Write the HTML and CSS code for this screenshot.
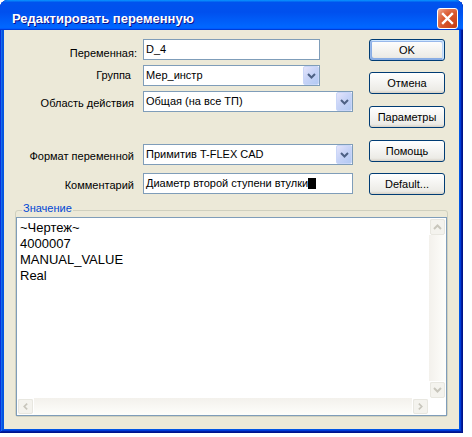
FILE: index.html
```html
<!DOCTYPE html>
<html lang="ru">
<head>
    <meta charset="UTF-8">
    <title>Редактировать переменную</title>
    <link rel="stylesheet" href="styles.css">
</head>
<body>
    <div class="window">
        <div class="titlebar">
            <span class="title">Редактировать переменную</span>
            <span class="close">
                <svg width="19" height="19" viewBox="0 0 19 19">
                    <path d="M5 5 L14 14 M14 5 L5 14" stroke="#fff" stroke-width="2.4" stroke-linecap="square" fill="none"/>
                </svg>
            </span>
        </div>
        <div class="client">
            <div class="top">
                <div class="form">
                    <div class="field">
                        <label class="field-label label-low">Переменная:</label>
                        <div class="input">D_4</div>
                    </div>
                    <div class="field">
                        <label class="field-label label-high">Группа</label>
                        <div class="combo">
                            <span class="combo-text">Мер_инстр</span>
                            <span class="combo-btn"><svg width="9" height="6" viewBox="0 0 9 6"><path d="M1 1 L4.5 4.5 L8 1" stroke="#4d6185" stroke-width="2" fill="none"/></svg></span>
                        </div>
                    </div>
                    <div class="field">
                        <label class="field-label">Область действия</label>
                        <div class="combo combo-wide">
                            <span class="combo-text">Общая (на все ТП)</span>
                            <span class="combo-btn"><svg width="9" height="6" viewBox="0 0 9 6"><path d="M1 1 L4.5 4.5 L8 1" stroke="#4d6185" stroke-width="2" fill="none"/></svg></span>
                        </div>
                    </div>
                    <div class="field field-format">
                        <label class="field-label">Формат переменной</label>
                        <div class="combo combo-wide">
                            <span class="combo-text">Примитив T-FLEX CAD</span>
                            <span class="combo-btn"><svg width="9" height="6" viewBox="0 0 9 6"><path d="M1 1 L4.5 4.5 L8 1" stroke="#4d6185" stroke-width="2" fill="none"/></svg></span>
                        </div>
                    </div>
                    <div class="field field-comment">
                        <label class="field-label">Комментарий</label>
                        <div class="input input-wide">Диаметр второй ступени втулки<span class="caret"></span></div>
                    </div>
                </div>
                <div class="buttons">
                    <button class="btn btn-default">OK</button>
                    <button class="btn">Отмена</button>
                    <button class="btn btn-spaced">Параметры</button>
                    <button class="btn btn-spaced">Помощь</button>
                    <button class="btn">Default...</button>
                </div>
            </div>
            <div class="group">
                <span class="group-title">Значение</span>
                <div class="memo">
                    <div class="memo-main">
                        <div class="memo-text">
                            <div>~Чертеж~</div>
                            <div>4000007</div>
                            <div>MANUAL_VALUE</div>
                            <div>Real</div>
                        </div>
                        <div class="vscroll">
                            <span class="sb-btn"><svg width="9" height="6" viewBox="0 0 9 6"><path d="M1 5 L4.5 1.5 L8 5" stroke="#c8c6bc" stroke-width="2" fill="none"/></svg></span>
                            <span class="sb-track"></span>
                            <span class="sb-btn"><svg width="9" height="6" viewBox="0 0 9 6"><path d="M1 1 L4.5 4.5 L8 1" stroke="#c8c6bc" stroke-width="2" fill="none"/></svg></span>
                        </div>
                    </div>
                    <div class="memo-bottom">
                        <div class="hscroll">
                            <span class="sb-btn"><svg width="6" height="9" viewBox="0 0 6 9"><path d="M5 1 L1.5 4.5 L5 8" stroke="#c8c6bc" stroke-width="2" fill="none"/></svg></span>
                            <span class="sb-track sb-track-h"></span>
                            <span class="sb-btn"><svg width="6" height="9" viewBox="0 0 6 9"><path d="M1 1 L4.5 4.5 L1 8" stroke="#c8c6bc" stroke-width="2" fill="none"/></svg></span>
                        </div>
                        <span class="sb-corner"></span>
                    </div>
                </div>
            </div>
        </div>
    </div>
</body>
</html>
```

FILE: styles.css
```css
body {
    margin: 0;
    background-color: #fff;
    font-family: "Liberation Sans", Arial, sans-serif;
    font-size: 11px;
    color: #000;
}

.window {
    width: 463px;
    height: 433px;
    box-sizing: border-box;
    display: flex;
    flex-direction: column;
    background-color: #0055e5;
    border-radius: 8px 8px 0 0;
    box-shadow: inset -1px -1px #00138c, inset 1px 1px #0831d9,
        inset -2px -2px #001ea0, inset 2px 2px #166aee,
        inset -3px -3px #003bda, inset 3px 3px #0855dd;
}

.titlebar {
    height: 30px;
    box-sizing: border-box;
    display: flex;
    align-items: center;
    justify-content: space-between;
    padding: 6px 5px 0 12px;
    border-radius: 8px 8px 0 0;
    background: linear-gradient(180deg, #0997ff, #0053ee 8%, #0050ee 40%, #06f 88%, #06f 93%, #005bff 95%, #003dd7 96%, #003dd7);
}

.title {
    color: #fff;
    font-weight: bold;
    font-size: 13px;
    text-shadow: 1px 1px #0f1089;
}

/* кнопка закрытия */
.close {
    width: 21px;
    height: 21px;
    box-sizing: border-box;
    border: 1px solid #fff;
    border-radius: 3px;
    display: flex;
    align-items: center;
    justify-content: center;
    background: radial-gradient(circle at 90% 90%, #c84016 0%, #d9582e 55%, #e27754 75%, #f0a88e 95%);
}

.client {
    height: 399px;
    margin: 0 4px 4px;
    background-color: #ece9d8;
}

.top {
    height: 165px;
    box-sizing: border-box;
    padding-top: 9px;
    display: flex;
}

.form {
    width: 349px;
    display: flex;
    flex-direction: column;
    gap: 5px;
}

.field {
    display: flex;
    align-items: flex-start;
    height: 21px;
}

.field-format {
    margin-top: 27px;
}

.field-comment {
    margin-top: 3px;
}

.field-label {
    width: 130px;
    box-sizing: border-box;
    margin-right: 9px;
    padding-top: 6px;
    line-height: 13px;
    text-align: right;
    white-space: nowrap;
}

.label-low {
    padding-top: 8px;
    margin-right: 6px;
    width: 133px;
}

.label-high {
    padding-top: 4px;
    padding-right: 3px;
}

.input,
.combo {
    width: 177px;
    height: 21px;
    box-sizing: border-box;
    border: 1px solid #7f9db9;
    background-color: #fff;
    display: flex;
    align-items: center;
    line-height: 13px;
    white-space: nowrap;
}

.input {
    padding-left: 2px;
}

.input-wide {
    width: 210px;
}

.combo-wide {
    width: 210px;
}

.combo-text {
    flex: 1;
    padding-left: 2px;
}

.combo-btn {
    width: 16px;
    height: 19px;
    box-sizing: border-box;
    border: 1px solid #c9d6f8;
    border-radius: 2px;
    background: linear-gradient(135deg, #e4e4fb 0%, #c8d4f7 45%, #b2c9f3 100%);
    display: flex;
    align-items: center;
    justify-content: center;
}

.caret {
    display: inline-block;
    width: 8px;
    height: 11px;
    background-color: #000;
    vertical-align: -2px;
}

.buttons {
    margin-left: 16px;
    width: 76px;
    display: flex;
    flex-direction: column;
    gap: 11px;
}

.btn {
    width: 76px;
    height: 22px;
    padding: 0;
    font-family: "Liberation Sans", Arial, sans-serif;
    font-size: 11px;
    color: #000;
    border: 1px solid #003c74;
    border-radius: 3px;
    background: linear-gradient(180deg, #fff, #ecebe6 86%, #d6d0c5);
}

.btn-default {
    box-shadow: inset -1px 1px #cee7ff, inset 1px 2px #98b8ea, inset -2px 2px #bcd4f6, inset 1px -1px #89ade4, inset 2px -2px #89ade4;
}

.btn-spaced {
    margin-top: 1px;
}

/* группа Значение */
.group {
    position: relative;
    margin: 15px 0 0 11px;
    width: 433px;
    height: 207px;
    box-sizing: border-box;
    border: 1px solid #d0d0bf;
    border-radius: 3px;
    padding-top: 6px;
}

.group-title {
    position: absolute;
    left: 6px;
    top: -9px;
    padding: 0 1px;
    line-height: 13px;
    color: #0046d5;
    background-color: #ece9d8;
}

.memo {
    height: 199px;
    box-sizing: border-box;
    border: 1px solid #7f9db9;
    background-color: #fff;
    display: flex;
    flex-direction: column;
}

.memo-main {
    flex: 1;
    display: flex;
}

.memo-text {
    flex: 1;
    padding: 2px 3px;
    font-size: 13px;
    line-height: 16px;
}

.vscroll {
    width: 17px;
    display: flex;
    flex-direction: column;
    background: linear-gradient(90deg, #f3f1ec, #fefefb);
}

.hscroll {
    flex: 1;
    height: 17px;
    display: flex;
    background: linear-gradient(180deg, #f3f1ec, #fefefb);
}

.sb-track {
    flex: 1;
}

.sb-btn {
    width: 17px;
    height: 17px;
    box-sizing: border-box;
    border: 1px solid #fff;
    display: flex;
    align-items: center;
    justify-content: center;
}

.sb-btn svg {
    padding: 3px;
    border: 1px solid #e8e7e0;
    border-radius: 2px;
    background-color: #f4f3ee;
}

.vscroll .sb-btn svg {
    padding: 4px 2px;
}

.hscroll .sb-btn svg {
    padding: 2px 4px;
}

.sb-corner {
    width: 17px;
    height: 17px;
    background-color: #fff;
}

.memo-bottom {
    display: flex;
}
```
